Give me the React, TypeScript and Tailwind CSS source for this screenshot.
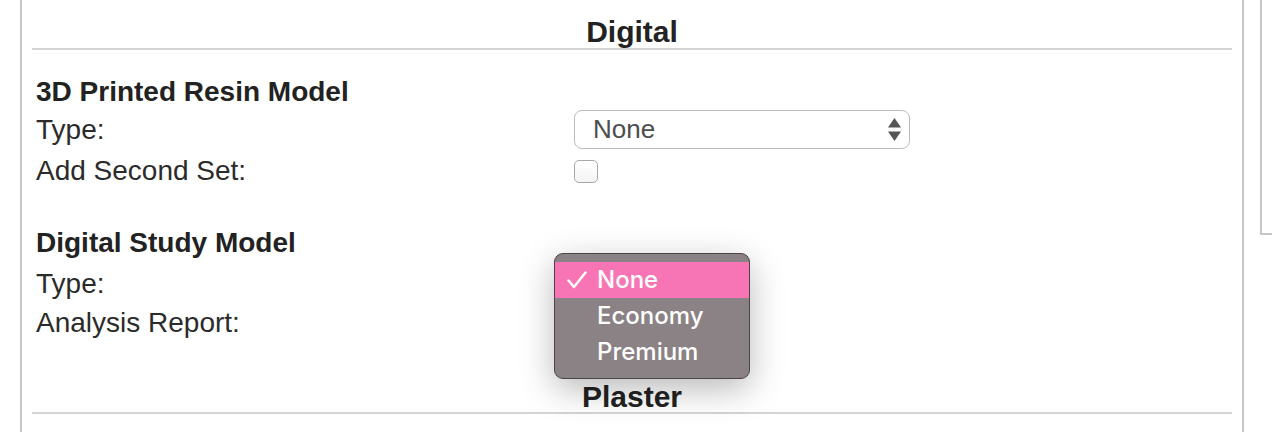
import React from "react";

function SelectBox({ value, width }: { value: string; width: string }) {
  return (
    <div
      className={`flex h-[39px] ${width} items-center justify-between rounded-[8px] border-[1.5px] border-[#bcbcbc] bg-white pl-[18px] pr-[8px] pb-[2px]`}
    >
      <span className="text-[26px] leading-[26px] text-[#4d4d4d]">{value}</span>
      <svg width="13" height="23" viewBox="0 0 13 23" className="mt-[2px]">
        <path d="M6.5 0 L13 9.5 L0 9.5 Z" fill="#555" />
        <path d="M0 13.5 L13 13.5 L6.5 23 Z" fill="#555" />
      </svg>
    </div>
  );
}

function Checkbox() {
  return (
    <div className="mt-[3px] h-[23px] w-[24px] rounded-[5px] border border-[#a8a8a8] bg-gradient-to-b from-white to-[#f4f4f4]" />
  );
}

function Label({ text, pad = "" }: { text: string; pad?: string }) {
  return <div className={`w-[538px] shrink-0 text-[28px] leading-[20px] ${pad}`}>{text}</div>;
}

function PopupMenu() {
  const items = ["None", "Economy", "Premium"];
  return (
    <div className="absolute left-[554px] top-[253px] w-[196px] rounded-[9px] border border-[#4a4446] bg-[#8a8284] py-[8px] shadow-[0_10px_34px_rgba(0,0,0,0.28)] font-['Inter',sans-serif]">
      {items.map((item, i) => (
        <div
          key={item}
          className={`flex h-[36px] items-center text-[24px] font-medium leading-[36px] text-white ${
            i === 0 ? "bg-[#f775b4]" : ""
          }`}
        >
          <span className="flex w-[42px] justify-center pl-[2px]">
            {i === 0 && (
              <svg width="20" height="18" viewBox="0 0 20 18">
                <path d="M1.5 9.5 L7 16 L18.5 1.5" fill="none" stroke="white" strokeWidth="2.4" strokeLinecap="round" strokeLinejoin="round" />
              </svg>
            )}
          </span>
          <span>{item}</span>
        </div>
      ))}
    </div>
  );
}

export default function App() {
  return (
    <div className="relative flex h-[432px] w-[1272px] overflow-hidden bg-white font-['Liberation_Sans',Arial,sans-serif] text-[#2b2b2b]">
      <div className="ml-[20px] w-[1224px] shrink-0 border-x-2 border-[#c6c6c6] px-[10px]">
        {/* Digital */}
        <h2 className="mt-[13px] h-[35px] text-center text-[30px] font-bold leading-[37px] text-[#222]">Digital</h2>
        <div className="h-[2px] bg-[#d4d4d4]" />

        <div className="px-[4px]">
          <h3 className="mt-[23px] h-[34px] text-[28px] font-bold leading-[38px] text-[#222]">3D Printed Resin Model</h3>
          <div className="mt-[3px] flex items-center">
            <div className="w-[538px] shrink-0 text-[28px] leading-[39px]">Type:</div>
            <SelectBox value="None" width="w-[336px]" />
          </div>
          <div className="mt-[8px] flex items-start">
            <Label text="Add Second Set:" pad="pt-[4px]" />
            <Checkbox />
          </div>

          <h3 className="mt-[43px] h-[34px] text-[28px] font-bold leading-[34px] text-[#222]">Digital Study Model</h3>
          <div className="mt-[14px] flex h-[39px] items-start">
            <Label text="Type:" />
            <SelectBox value="None" width="w-[170px]" />
          </div>
          <div className="flex items-start">
            <Label text="Analysis Report:" />
            <Checkbox />
          </div>
        </div>

        {/* Plaster */}
        <h2 className="mt-[38px] h-[35px] text-center text-[30px] font-bold leading-[39px] text-[#222]">Plaster</h2>
        <div className="h-[2px] bg-[#d4d4d4]" />
      </div>

      <div className="ml-[16px] h-[235px] flex-1 border-b-2 border-l-2 border-[#c6c6c6]" />

      <PopupMenu />
    </div>
  );
}
